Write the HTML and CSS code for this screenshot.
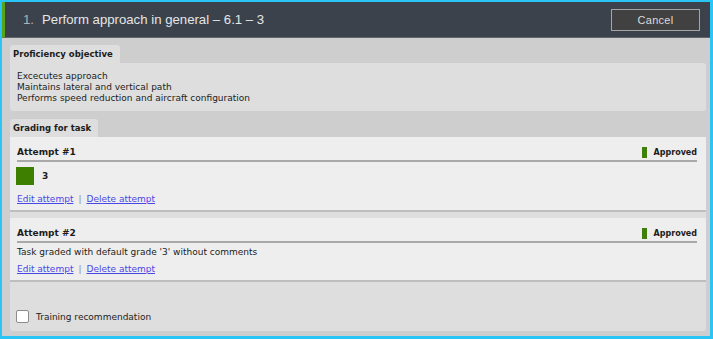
FILE: index.html
```html
<!DOCTYPE html>
<html lang="en">

<head>
    <meta charset="UTF-8">
    <meta name="viewport" content="width=device-width, initial-scale=1.0">
    <title>Task grading</title>
    <link rel="stylesheet" href="styles.css">
</head>

<body>

    <div class="dialog">
        <!-- Header -->
        <div class="dialog-header">
            <h1 class="task-title"><span class="task-num">1.</span>Perform approach in general – 6.1 – 3</h1>
            <button class="btn-cancel">Cancel</button>
        </div>

        <div class="dialog-body">
            <!-- Objective -->
            <div class="tab">Proficiency objective</div>
            <div class="panel objective">
                <p>Excecutes approach</p>
                <p>Maintains lateral and vertical path</p>
                <p>Performs speed reduction and aircraft configuration</p>
            </div>

            <!-- Grading -->
            <div class="tab">Grading for task</div>
            <div class="panel grading">
                <div class="attempt">
                    <div class="attempt-head">
                        <span class="attempt-title">Attempt #1</span>
                        <span class="status"><i class="status-bar"></i>Approved</span>
                    </div>
                    <div class="grade">
                        <span class="grade-box"></span>
                        <span class="grade-value">3</span>
                    </div>
                    <div class="attempt-links">
                        <a href="#">Edit attempt</a><span class="sep">|</span><a href="#">Delete attempt</a>
                    </div>
                </div>

                <div class="attempt">
                    <div class="attempt-head">
                        <span class="attempt-title">Attempt #2</span>
                        <span class="status"><i class="status-bar"></i>Approved</span>
                    </div>
                    <p class="attempt-comment">Task graded with default grade '3' without comments</p>
                    <div class="attempt-links short">
                        <a href="#">Edit attempt</a><span class="sep">|</span><a href="#">Delete attempt</a>
                    </div>
                </div>

                <label class="recommend">
                    <span class="checkbox"></span>
                    Training recommendation
                </label>
            </div>
        </div>
    </div>

</body>

</html>
```

FILE: styles.css
```css
body {
    margin: 0;
    padding: 0;
    font-family: "DejaVu Sans", Verdana, sans-serif;
    font-size: 9px;
    color: #1c1c1c;
    background-color: #29c5f6;
}

.dialog {
    width: 713px;
    height: 339px;
    box-sizing: border-box;
    border-style: solid;
    border-color: #29c5f6;
    border-width: 2px 3px 3px 2px;
    background-color: #cecece;
    display: flex;
    flex-direction: column;
}

/* Header */
.dialog-header {
    height: 35px;
    flex-shrink: 0;
    display: flex;
    align-items: center;
    justify-content: space-between;
    padding: 0 10px 0 18px;
    background-color: #3b424c;
    border-left: 3px solid #58a21c;
    border-bottom: 1px solid #5f666f;
}

.task-title {
    margin: 0;
    font-family: "Liberation Sans", Arial, sans-serif;
    font-size: 13.2px;
    font-weight: normal;
    color: #e6e6e6;
}

.task-num {
    color: #aeb2b7;
    margin-right: 8px;
}

.btn-cancel {
    width: 89px;
    height: 22px;
    padding: 0;
    background-color: #414141;
    border: 1px solid #a5a5a5;
    color: #dcdcdc;
    font-family: "Liberation Sans", Arial, sans-serif;
    font-size: 11px;
    letter-spacing: 0.3px;
}

/* Body */
.dialog-body {
    flex: 1;
    display: flex;
    flex-direction: column;
    align-items: flex-start;
    padding: 7px 4px 5px 8px;
}

.tab {
    height: 18px;
    line-height: 19px;
    padding: 0 7px 0 3px;
    background-color: #dedede;
    border-radius: 3px 3px 0 0;
    font-size: 8.5px;
    font-weight: bold;
}

.panel {
    align-self: stretch;
    background-color: #dedede;
    border-radius: 0 3px 3px 3px;
}

.objective {
    padding: 8px 7px 7px;
    margin-bottom: 8px;
}

.objective p {
    margin: 0;
    line-height: 11px;
}

.grading {
    flex: 1;
    display: flex;
    flex-direction: column;
}

/* Attempts */
.attempt {
    background-color: #eeeeee;
    padding: 8px 9px 5px 7px;
    border-bottom: 2px solid #bebebe;
    margin-bottom: 6px;
}

.attempt-head {
    display: flex;
    justify-content: space-between;
    align-items: center;
    line-height: 15px;
    border-bottom: 2px solid #a9a9a9;
}

.attempt-title {
    font-size: 9px;
    font-weight: bold;
}

.status {
    display: flex;
    align-items: center;
    font-size: 8px;
    font-weight: bold;
}

.status-bar {
    width: 5px;
    height: 11px;
    margin-right: 7px;
    background-color: #3f7f0b;
}

.grade {
    display: flex;
    align-items: center;
    margin-top: 5px;
}

.grade-box {
    width: 18px;
    height: 18px;
    margin-left: -1px;
    background-color: #3f7f00;
}

.grade-value {
    margin-left: 8px;
    font-weight: bold;
}

.attempt-comment {
    margin: 3px 0 0;
    line-height: 12px;
}

.attempt-links {
    margin-top: 8px;
    line-height: 12px;
}

.attempt-links.short {
    margin-top: 5px;
}

.attempt-links a {
    color: #4848e6;
}

.sep {
    color: #8a8a8a;
    margin: 0 5px;
}

.recommend {
    margin-top: auto;
    display: flex;
    align-items: center;
    padding: 0 0 8px 6px;
}

.checkbox {
    width: 11px;
    height: 11px;
    margin-right: 7px;
    background-color: #fff;
    border: 1px solid #8c8c8c;
    border-radius: 2px;
}
```
